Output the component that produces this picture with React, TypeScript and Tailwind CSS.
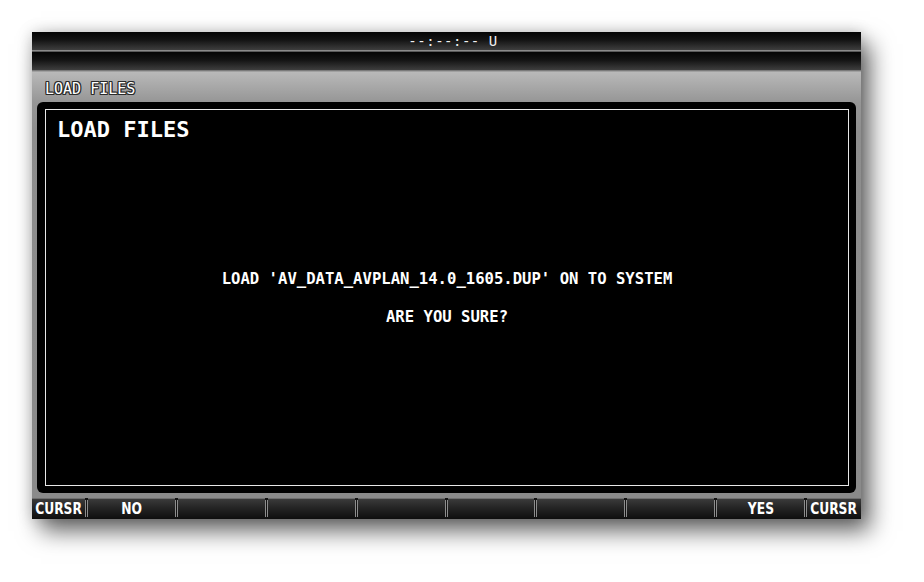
import React from "react";

const mono = { fontFamily: '"DejaVu Sans Mono", "Liberation Mono", monospace' };
const sans = { fontFamily: '"DejaVu Sans", "Liberation Sans", sans-serif' };

function Sep() {
  return (
    <div className="flex w-[3px] flex-col bg-[#8c8c8c]">
      <div className="h-[2px] w-full bg-[#111]" />
      <div className="mx-auto w-[1px] flex-1 bg-[#111]" />
      <div className="h-[2px] w-full bg-[#111]" />
    </div>
  );
}

function Key({ label, className = "flex-1" }: { label?: string; className?: string }) {
  return (
    <div
      className={`${className} flex items-center justify-center overflow-hidden border-t border-[#6e6e6e] bg-[linear-gradient(to_bottom,#3a3a3a,#262626_40%,#0e0e0e)] text-[15px] font-bold leading-none text-white`}
      style={sans}
    >
      {label ? <span className="inline-block scale-x-[0.82] pt-[1px]">{label}</span> : null}
    </div>
  );
}

export default function App() {
  return (
    <div className="min-h-[582px] w-[924px] bg-white pl-[32px] pt-[32px]">
      <div className="flex h-[487px] w-[829px] flex-col shadow-[9px_12px_22px_rgba(0,0,0,0.6),0_0_14px_rgba(0,0,0,0.18)]">
        {/* top bar 1 */}
        <div
          className="flex h-[18px] items-center justify-center bg-[linear-gradient(to_bottom,#040404,#141414_45%,#3e3e3e)] pl-[13px] text-[14px] leading-none tracking-[0.5px] text-[#f0f0f0]"
          style={mono}
        >
          --:--:-- U
        </div>
        <div className="h-[1px] bg-[#8a8a8a]" />
        <div className="h-[1px] bg-[#5a5a5a]" />
        {/* top bar 2 */}
        <div className="h-[18px] bg-[linear-gradient(to_bottom,#040404,#141414_45%,#3e3e3e)]" />
        <div className="h-[1px] bg-[#7a7a7a]" />
        <div className="h-[1px] bg-[#a0a0a0]" />
        {/* gray body */}
        <div className="flex flex-1 flex-col bg-[linear-gradient(to_bottom,#b9b9b9,#969696_30px,#8e8e8e_60px,#8a8a8a)] px-[5px] pb-[5px]">
          <div
            className="flex h-[30px] items-center pl-[8px] pt-[4px] text-[15px] leading-none text-white"
            style={{
              ...mono,
              textShadow:
                "1px 0 0 #2a2a2a, -1px 0 0 #2a2a2a, 0 1px 0 #2a2a2a, 0 -1px 0 #2a2a2a, 1px 1px 0 #2a2a2a, -1px -1px 0 #2a2a2a, 1px -1px 0 #2a2a2a, -1px 1px 0 #2a2a2a",
            }}
          >
            LOAD FILES
          </div>
          <div className="flex flex-1 flex-col rounded-[6px] bg-black pb-[7px] pl-[8px] pr-[7px] pt-[7px]">
            <div className="flex flex-1 flex-col border-[1.5px] border-[#e8e8e8] text-white" style={mono}>
              <div className="h-[34px] pl-[11px] pt-[8px] text-[22px] font-bold leading-[24px]">LOAD FILES</div>
              <div className="flex flex-1 flex-col items-center justify-center gap-[18px] pb-[34px] text-[15.6px] font-bold leading-[20px]">
                <div>LOAD 'AV_DATA_AVPLAN_14.0_1605.DUP' ON TO SYSTEM</div>
                <div>ARE YOU SURE?</div>
              </div>
            </div>
          </div>
        </div>
        {/* softkeys */}
        <div className="flex h-[21px] bg-[#8c8c8c]">
          <Key label="CURSR" className="w-[53px]" />
          <Sep />
          <Key label="NO" />
          <Sep />
          <Key />
          <Sep />
          <Key />
          <Sep />
          <Key />
          <Sep />
          <Key />
          <Sep />
          <Key />
          <Sep />
          <Key />
          <Sep />
          <Key label="YES" />
          <Sep />
          <Key label="CURSR" className="w-[54px]" />
        </div>
      </div>
    </div>
  );
}
